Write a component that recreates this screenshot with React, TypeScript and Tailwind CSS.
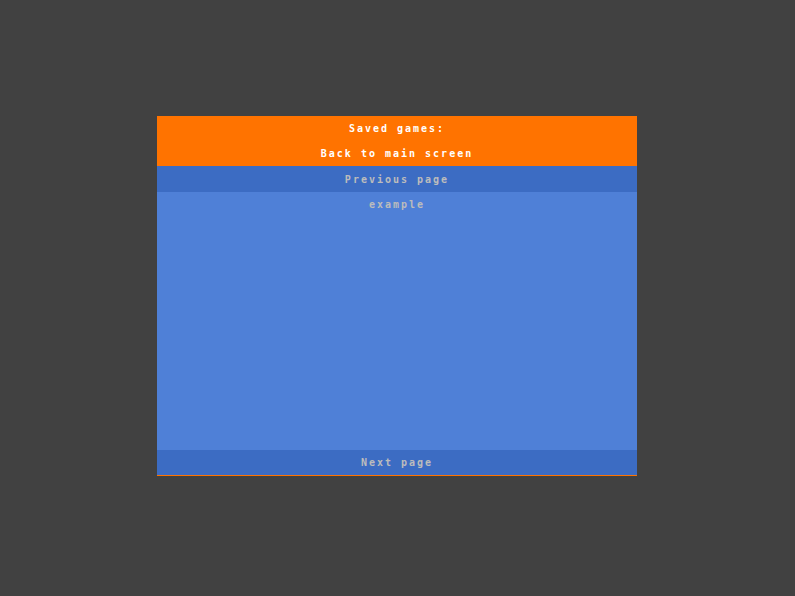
export default function App() {
  return (
    <div className="min-h-screen w-full bg-[#414141] pt-[116px]">
      <div
        className="ml-[157px] flex h-[360px] w-[480px] flex-col bg-[#ff7300] text-[10px] font-bold tracking-[2px]"
        style={{ fontFamily: '"DejaVu Sans Mono", "Liberation Mono", monospace' }}
      >
        <div className="flex h-[25px] items-center justify-center text-white">Saved games:</div>
        <div className="flex h-[25px] items-center justify-center text-white">Back to main screen</div>
        <div className="flex h-[26px] items-center justify-center bg-[#3c6cc3] text-[#bcbcbc]">Previous page</div>
        <div className="flex-1 bg-[#4f80d7]">
          <div className="flex h-[25px] items-center justify-center text-[#bcbcbc]">example</div>
        </div>
        <div className="mb-px flex h-[25px] items-center justify-center bg-[#3c6cc3] pb-px text-[#bcbcbc]">Next page</div>
      </div>
    </div>
  );
}
